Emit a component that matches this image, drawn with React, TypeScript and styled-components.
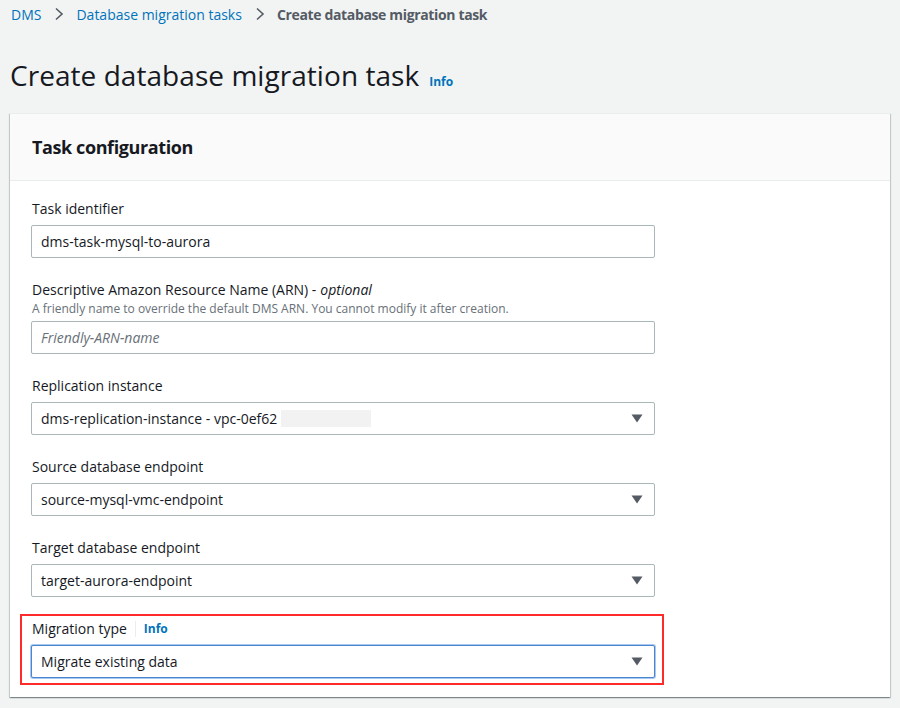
import * as React from "react";
import styled, { createGlobalStyle } from "styled-components";

const GlobalStyle = createGlobalStyle`
    html, body {
        margin: 0;
        padding: 0;
        background-color: #f2f3f3;
        font-family: "Open Sans", "Liberation Sans", Arial, sans-serif;
        color: #16191f;
    }
`;

const Page = styled.div`
    width: 900px;
    height: 708px;
    padding: 0 10px;
    box-sizing: border-box;
    overflow: hidden;
`;

const Breadcrumbs = styled.nav`
    display: flex;
    align-items: center;
    height: 28px;
    font-size: 14px;
    padding-left: 1px;
`;

const Crumb = styled.span<{ $current?: boolean }>`
    color: ${(p) => (p.$current ? "#545b64" : "#0073bb")};
    font-weight: ${(p) => (p.$current ? 700 : 400)};
    letter-spacing: ${(p) => (p.$current ? "-0.35px" : "0")};
`;

const Chevron = styled.svg`
    width: 10px;
    height: 14px;
    margin: 0 12px 0 13px;
`;

const Heading = styled.div`
    display: flex;
    align-items: baseline;
    margin-top: 29px;
    height: 36px;
`;

const Title = styled.h1`
    margin: 0;
    font-size: 28px;
    line-height: 36px;
    font-weight: 400;
    color: #16191f;
    letter-spacing: 0.05px;
`;

const InfoLink = styled.span<{ $gap?: number }>`
    color: #0073bb;
    font-weight: 700;
    font-size: 12px;
    margin-left: ${(p) => p.$gap ?? 10}px;
`;

const Card = styled.section`
    margin-top: 20px;
    background: #fff;
    box-shadow: 0 1px 1px 0 rgba(0, 28, 36, 0.3), 1px 1px 1px 0 rgba(0, 28, 36, 0.15),
        -1px 1px 1px 0 rgba(0, 28, 36, 0.15);
    border-top: 1px solid #eaeded;
`;

const CardHeader = styled.header`
    height: 66px;
    display: flex;
    align-items: center;
    padding: 0 22px;
    background: #fafafa;
    border-bottom: 1px solid #eaeded;
`;

const CardTitle = styled.h2`
    margin: 0;
    font-size: 18px;
    font-weight: 700;
    color: #16191f;
    letter-spacing: -0.4px;
`;

const CardBody = styled.div`
    display: flex;
    flex-direction: column;
    gap: 21px;
    padding: 17px 21px 12px;
`;

const Field = styled.div`
    display: flex;
    flex-direction: column;
    width: 624px;
`;

const Label = styled.div`
    display: flex;
    align-items: center;
    font-size: 14px;
    line-height: 22px;
    color: #16191f;
    padding-left: 1px;

    em {
        margin-left: 4px;
    }
`;

const Divider = styled.span`
    width: 1px;
    height: 16px;
    background: #eaeded;
    margin: 0 8px;
`;

const Description = styled.div`
    font-size: 12px;
    line-height: 16px;
    color: #687078;
    padding-left: 1px;
`;

const Control = styled.div<{ $focused?: boolean; $placeholder?: boolean; $gap?: number }>`
    margin-top: ${(p) => p.$gap ?? 5}px;
    height: 33px;
    box-sizing: border-box;
    display: flex;
    align-items: center;
    padding: 0 11px 0 9px;
    border: 1px solid ${(p) => (p.$focused ? "#4a86cf" : "#aab7b8")};
    border-radius: 2px;
    font-size: 14px;
    color: ${(p) => (p.$placeholder ? "#687078" : "#16191f")};
    font-style: ${(p) => (p.$placeholder ? "italic" : "normal")};
    background: #fff;
    box-shadow: ${(p) => (p.$focused ? "0 0 0 1px #a9c8ef" : "none")};
`;

const ControlText = styled.span`
    flex: 1;
    display: flex;
    align-items: center;
`;

const Redacted = styled.span`
    display: inline-block;
    width: 90px;
    height: 17px;
    background: #f2f2f2;
    margin-left: 4px;
`;

const Caret = styled.svg`
    width: 12px;
    height: 9px;
`;

const Highlight = styled.div`
    margin: -4px 0 0 -11px;
    padding: 2px 7px 5px 9px;
    border: 2px solid #ff2b2b;
    width: 624px;
`;

const SelectCaret = () => (
    <Caret viewBox="0 0 12 9">
        <polygon points="0.5,0.5 11.5,0.5 6,8.5" fill="#545b64" />
    </Caret>
);

const CrumbChevron = () => (
    <Chevron viewBox="0 0 10 14">
        <polyline points="2,1.5 8,7 2,12.5" fill="none" stroke="#545b64" strokeWidth="1.6" />
    </Chevron>
);

interface SelectProps {
    label: string;
    value: React.ReactNode;
}

const SelectField = (props: SelectProps) => (
    <Field>
        <Label>{props.label}</Label>
        <Control>
            <ControlText>{props.value}</ControlText>
            <SelectCaret />
        </Control>
    </Field>
);

const App = () => {
    return (
        <Page>
            <GlobalStyle />
            <Breadcrumbs>
                <Crumb>DMS</Crumb>
                <CrumbChevron />
                <Crumb>Database migration tasks</Crumb>
                <CrumbChevron />
                <Crumb $current>Create database migration task</Crumb>
            </Breadcrumbs>
            <Heading>
                <Title>Create database migration task</Title>
                <InfoLink>Info</InfoLink>
            </Heading>
            <Card>
                <CardHeader>
                    <CardTitle>Task configuration</CardTitle>
                </CardHeader>
                <CardBody>
                    <Field>
                        <Label>Task identifier</Label>
                        <Control>
                            <ControlText>dms-task-mysql-to-aurora</ControlText>
                        </Control>
                    </Field>
                    <Field>
                        <Label>
                            Descriptive Amazon Resource Name (ARN) -<em>optional</em>
                        </Label>
                        <Description>
                            A friendly name to override the default DMS ARN. You cannot modify it after creation.
                        </Description>
                        <Control $placeholder $gap={4}>
                            <ControlText>Friendly-ARN-name</ControlText>
                        </Control>
                    </Field>
                    <SelectField
                        label="Replication instance"
                        value={
                            <>
                                dms-replication-instance - vpc-0ef62
                                <Redacted />
                            </>
                        }
                    />
                    <SelectField label="Source database endpoint" value="source-mysql-vmc-endpoint" />
                    <SelectField label="Target database endpoint" value="target-aurora-endpoint" />
                    <Highlight>
                        <Field>
                            <Label>
                                Migration type
                                <Divider />
                                <InfoLink $gap={0}>Info</InfoLink>
                            </Label>
                            <Control $focused>
                                <ControlText>Migrate existing data</ControlText>
                                <SelectCaret />
                            </Control>
                        </Field>
                    </Highlight>
                </CardBody>
            </Card>
        </Page>
    );
};

export default App;
